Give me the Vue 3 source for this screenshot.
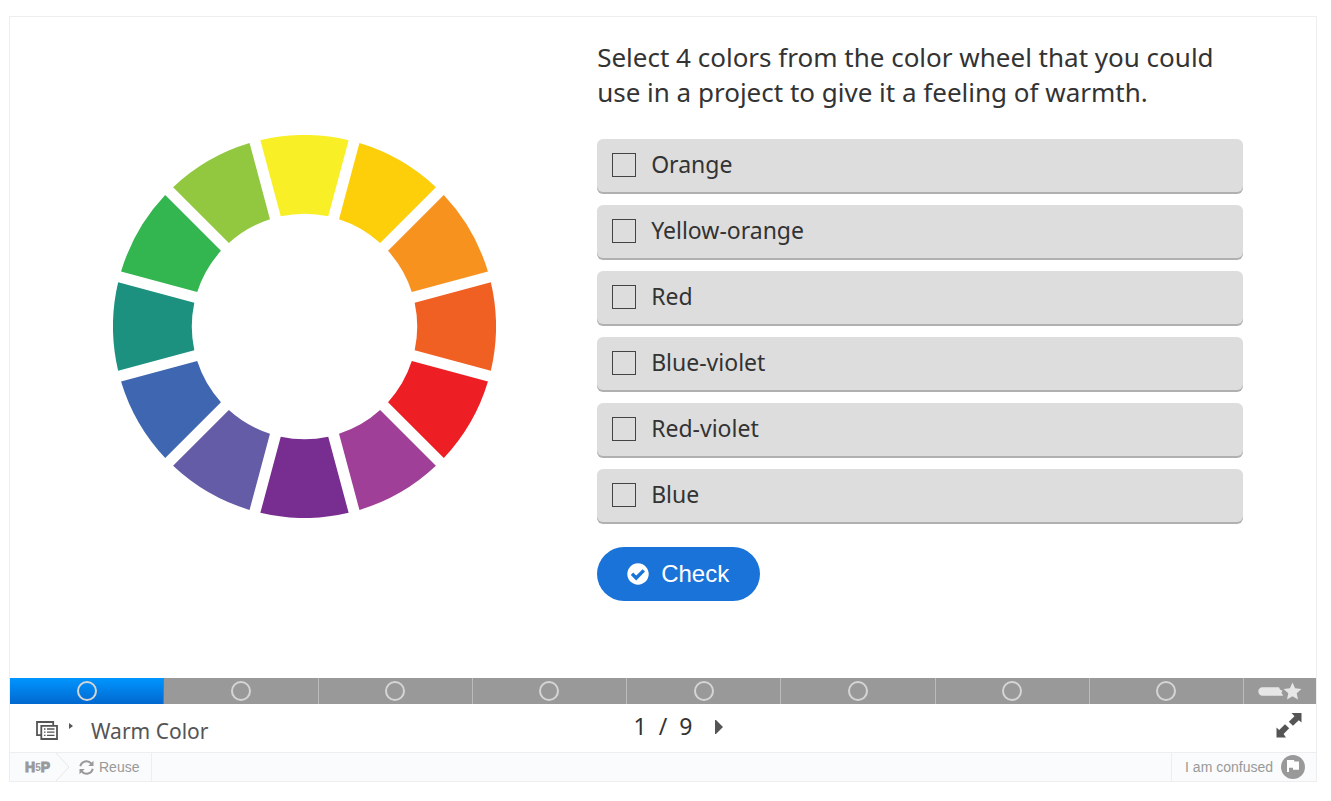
<script setup>
import { ref } from 'vue'

const wheel = [
  '#f8ef26', '#fccf0a', '#f8921f', '#f16023', '#ee1e25', '#a03f97',
  '#782e90', '#655ca7', '#3f67b1', '#1c917f', '#33b550', '#91c83f'
]
const options = ['Orange', 'Yellow-orange', 'Red', 'Blue-violet', 'Red-violet', 'Blue']
const chosen = ref([])
const total = 9
const current = ref(1)
</script>

<template>
  <main class="frame">
    <section class="slide">
      <svg class="wheel" viewBox="-192 -192 384 384" role="img" aria-label="Color wheel">
        <path
          v-for="(color, i) in wheel"
          :key="color"
          :fill="color"
          :transform="`rotate(${i * 30})`"
          d="M-44.26-186.83A192 192 0 0 1 44.26-186.83L23.8-110.46A113 113 0 0 0-23.8-110.46Z"
        />
      </svg>
      <form class="quiz" @submit.prevent>
        <fieldset>
          <legend>Select 4 colors from the color wheel that you could use in a project to give it a feeling of warmth.</legend>
          <label v-for="name in options" :key="name" class="option">
            <input v-model="chosen" type="checkbox" :value="name">
            <span>{{ name }}</span>
          </label>
        </fieldset>
        <button class="check" type="submit">
          <svg width="22" height="22" viewBox="0 0 22 22" aria-hidden="true">
            <circle cx="11" cy="11" r="10.7" fill="#fff" />
            <path d="M5 10.800l4.200 4.200 7.600-7.600" fill="none" stroke="#1a73d9" stroke-width="3.400" />
          </svg>
          <span>Check</span>
        </button>
      </form>
    </section>

    <nav class="progress" aria-label="Slides">
      <button
        v-for="n in total - 1"
        :key="n"
        class="part"
        :class="{ active: n === current }"
        type="button"
        :aria-label="`Slide ${n}`"
        @click="current = n"
      ><i class="dot"></i></button>
      <button class="part summary" type="button" aria-label="Summary" @click="current = total">
        <svg width="44" height="20" viewBox="0 0 44 20" aria-hidden="true">
          <path d="M4.500 6.300H21L22 8.500l2.500 1.300-1 2 1.700 2.900H4.500a4.200 4.200 0 0 1 0-8.400z" fill="#e6e6e6" />
          <path d="M34.500 1.500l2.600 5.700 6.300.7-4.700 4.300 1.300 6.200-5.500-3.100-5.500 3.100 1.300-6.200-4.700-4.300 6.300-.7z" fill="#e6e6e6" />
        </svg>
      </button>
    </nav>

    <footer class="controls">
      <button class="menu" type="button">
        <svg width="22" height="19" viewBox="0 0 22 19" fill="none" stroke="#555" aria-hidden="true">
          <path d="M5 14.200H1V1H17.200V4.500" stroke-width="1.800" />
          <path d="M5.300 4.800h15.700v13.200H5.300z" stroke-width="1.800" />
          <path d="M8 8h1.500M8 11.200h1.500M8 14.400h1.500M11 8h7.500M11 11.200h7.500M11 14.400h7.500" stroke-width="1.300" />
        </svg>
        <svg class="caret" width="4" height="6" viewBox="0 0 4 6" aria-hidden="true"><path d="M0 0l4 3-4 3z" fill="#555" /></svg>
        <span>Warm Color</span>
      </button>
      <div class="pager">
        <span>{{ current }}</span><span>/</span><span>{{ total }}</span>
        <button type="button" aria-label="Next slide">
          <svg width="8" height="14" viewBox="0 0 8 14" aria-hidden="true"><path d="M0 0h1l7 7-7 7H0z" fill="#555" /></svg>
        </button>
      </div>
      <button class="full" type="button" aria-label="Fullscreen">
        <svg width="26" height="26" viewBox="0 0 26 26" aria-hidden="true">
          <path d="M15.500 1H25.500V10.500L22.800 8.300 17 13.800 12.800 9.800 18.500 4.200z" fill="#555" />
          <path d="M.5 15.500L3.200 17.900 9 12.200 13.200 16.200 7.600 21.900 10 25.500H.5z" fill="#555" />
        </svg>
      </button>
    </footer>

    <div class="actions">
      <a class="logo" href="#" aria-label="H5P"><b>H</b><small>5</small><b>P</b></a>
      <svg class="chevron" width="14" height="28" viewBox="0 0 14 28" fill="none" stroke="#e8e8e8" aria-hidden="true"><path d="M0 0l13 14L0 28" /></svg>
      <button class="reuse" type="button">
        <svg width="15" height="15" viewBox="0 0 15 15" aria-hidden="true">
          <path d="M1.300 6.200A6.200 6.200 0 0 1 12.300 3.700M13.700 8.800A6.200 6.200 0 0 1 2.700 11.300" fill="none" stroke="#999" stroke-width="2" />
          <path d="M14.500.8v5.200H9.300zM.5 14.200V9h5.200z" fill="#999" />
        </svg>
        <span>Reuse</span>
      </button>
      <button class="confused" type="button">
        <span>I am confused</span>
        <svg width="24" height="24" viewBox="0 0 24 24" aria-hidden="true">
          <circle cx="12" cy="12" r="12" fill="#999" />
          <path d="M6 5h7.200v1.500H18v8.300h-6v-2H8V17H6z" fill="#fff" />
        </svg>
      </button>
    </div>
  </main>
</template>

<style>
body { background: #fff; }
</style>

<style scoped>
* { box-sizing: border-box; }
button {
  border: 0;
  padding: 0;
  background: none;
  color: inherit;
  font: inherit;
  cursor: pointer;
}
svg { display: block; flex: none; }
.frame {
  margin: 16px 14px 0 9px;
  border: 1px solid #eee;
  color: #333;
  font-family: "Noto Sans", sans-serif;
}
.slide {
  display: grid;
  grid-template-columns: 10fr 11fr;
  align-items: start;
  padding: 23px 73px 77px 0;
}
.wheel {
  width: 383px;
  max-width: 90%;
  margin: 95px 0 0 2px;
  justify-self: center;
}
fieldset {
  margin: 0;
  padding: 0;
  border: 0;
  min-width: 0;
  display: flex;
  flex-direction: column;
  gap: 13px;
}
legend {
  padding: 0;
  margin-bottom: 29px;
  font-size: 26px;
  line-height: 35px;
}
.option {
  display: flex;
  align-items: center;
  gap: 15px;
  height: 53px;
  padding: 0 15px 2px;
  border-radius: 6px;
  background: #ddd;
  box-shadow: 0 2px 0 #b0b0b0;
  font-size: 23px;
  line-height: 30px;
}
.option span { padding-bottom: 2px; }
.option input {
  appearance: none;
  flex: none;
  width: 24px;
  height: 24px;
  margin: 0;
  border: 1px solid #444;
}
.option input:checked { background: #1a73d9; }
.check {
  display: flex;
  align-items: center;
  gap: 12px;
  height: 54px;
  margin-top: 25px;
  padding: 0 31px 0 30px;
  border-radius: 27px;
  background: #1a73d9;
  color: #fff;
  font: 24px "Liberation Sans", Arial, sans-serif;
}
.progress { display: flex; height: 26px; }
.part {
  flex: 1;
  display: flex;
  align-items: center;
  justify-content: center;
  background: #999;
  border-right: 1px solid #bbb;
}
.part.active {
  background: linear-gradient(#0095ff, #0268cf);
  border-color: #1a8de8;
}
.part.summary { flex: 0 0 72px; border: 0; }
.dot {
  width: 20px;
  height: 20px;
  border: 2px solid #d5d5d5;
  border-radius: 50%;
}
.controls {
  display: grid;
  grid-template-columns: 1fr auto 1fr;
  height: 48px;
  padding: 0 14px 0 26px;
  color: #555;
}
.menu {
  display: flex;
  align-items: center;
  justify-self: start;
  padding-top: 4px;
  font-size: 21px;
}
.menu .caret { margin: 0 18px 8px 11px; }
.menu span { padding-top: 2px; }
.pager {
  display: flex;
  align-items: center;
  gap: 12px;
  padding-left: 19px;
  color: #333;
  font-size: 23px;
  line-height: 45px;
  height: 45px;
}
.pager button { padding-left: 11px; }
.full { justify-self: end; align-self: start; margin-top: 8px; }
.actions {
  display: flex;
  align-items: center;
  height: 29px;
  border-top: 1px solid #eee;
  background: #fafbfc;
  color: #999;
  font: 14px "Liberation Sans", Arial, sans-serif;
}
.logo {
  display: flex;
  align-items: center;
  width: 46px;
  padding-left: 15px;
  color: #999;
  text-decoration: none;
  font-size: 14px;
}
.logo b { -webkit-text-stroke: 1px #999; }
.logo small { font-size: 10px; font-weight: 700; }
.chevron { margin-right: 9px; }
.reuse {
  display: flex;
  align-items: center;
  align-self: stretch;
  gap: 5px;
  padding-right: 12px;
  border-right: 1px solid #eee;
}
.confused {
  display: flex;
  align-items: center;
  align-self: stretch;
  gap: 8px;
  margin-left: auto;
  padding: 0 11px 0 13px;
  border-left: 1px solid #eee;
}
</style>
